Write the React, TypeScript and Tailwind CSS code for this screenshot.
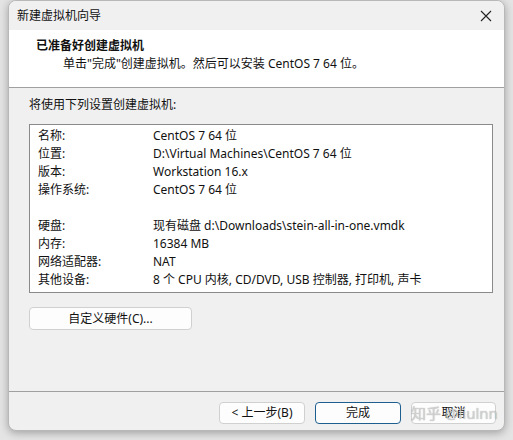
import React from 'react';

const rows: [string, string][] = [
  ['名称:', 'CentOS 7 64 位'],
  ['位置:', 'D:\\Virtual Machines\\CentOS 7 64 位'],
  ['版本:', 'Workstation 16.x'],
  ['操作系统:', 'CentOS 7 64 位'],
  ['', ''],
  ['硬盘:', '现有磁盘 d:\\Downloads\\stein-all-in-one.vmdk'],
  ['内存:', '16384 MB'],
  ['网络适配器:', 'NAT'],
  ['其他设备:', '8 个 CPU 内核, CD/DVD, USB 控制器, 打印机, 声卡'],
];

const font = { fontFamily: '"Noto Sans", "Noto Sans CJK SC", sans-serif' };

const App: React.FC = () => {
  return (
    <div className="w-[513px] h-[440px] bg-[#e4e4e4] overflow-hidden text-[12px] text-[#111]" style={font}>
      <div className="relative ml-[8px] w-[497px] h-[431px] bg-[#f0f0f0] border border-[#b8b8b8] rounded-[8px] shadow-[0_2px_8px_rgba(0,0,0,0.3)] flex flex-col overflow-hidden">
        {/* title bar */}
        <div className="h-[29px] flex items-center justify-between pl-[8px] pr-[10px] bg-[#f0f0f0]">
          <span className="text-[12px]">新建虚拟机向导</span>
          <svg width="12" height="12" viewBox="0 0 12 12" className="mr-[2px]">
            <path d="M1 1 L11 11 M11 1 L1 11" stroke="#222" strokeWidth="1.1" />
          </svg>
        </div>

        {/* header */}
        <div className="h-[58px] bg-white border-b border-[#a0a0a0] pl-[27px] pt-[7px]">
          <div className="font-bold text-[12px] leading-[18px]">已准备好创建虚拟机</div>
          <div className="pl-[27px] leading-[18px]">单击"完成"创建虚拟机。然后可以安装 CentOS 7 64 位。</div>
        </div>

        {/* body */}
        <div className="flex-1 flex flex-col pl-[20px] pr-[12px]">
          <div className="mt-[8px] leading-[18px]">将使用下列设置创建虚拟机:</div>
          <div className="mt-[10px] w-[464px] h-[169px] bg-white border border-[#8a8a8a] pl-[8px] pt-[2px]">
            {rows.map(([k, v], i) => (
              <div key={i} className="flex h-[18px] items-center">
                <span className="w-[115px] shrink-0">{k}</span>
                <span className="whitespace-nowrap">{v}</span>
              </div>
            ))}
          </div>
          <button className="mt-[14px] w-[163px] h-[23px] bg-[#fdfdfd] border border-[#d0d0d0] rounded-[4px] text-[12px] flex items-center justify-center">
            自定义硬件(C)...
          </button>
        </div>

        {/* footer */}
        <div className="h-[39px] border-t border-[#a0a0a0] flex items-center justify-end gap-[10px] pr-[8px] pt-[3px]">
          <button className="w-[86px] h-[22px] bg-[#fdfdfd] border border-[#d0d0d0] rounded-[4px] text-[12px]">
            &lt; 上一步(B)
          </button>
          <button className="w-[86px] h-[22px] bg-[#fdfdfd] border border-[#1f5f8f] rounded-[4px] text-[12px]">
            完成
          </button>
          <button className="w-[85px] h-[22px] bg-[#fdfdfd] border border-[#d0d0d0] rounded-[4px] text-[12px]">
            取消
          </button>
        </div>

        {/* watermark */}
        <div className="absolute left-[402px] top-[402px] text-[15px] leading-[20px] text-[#d8d8d8]/80 whitespace-nowrap pointer-events-none [text-shadow:0_0_1px_rgba(0,0,0,0.35)]">
          知乎 @liulnn
        </div>
      </div>
    </div>
  );
};

export default App;
